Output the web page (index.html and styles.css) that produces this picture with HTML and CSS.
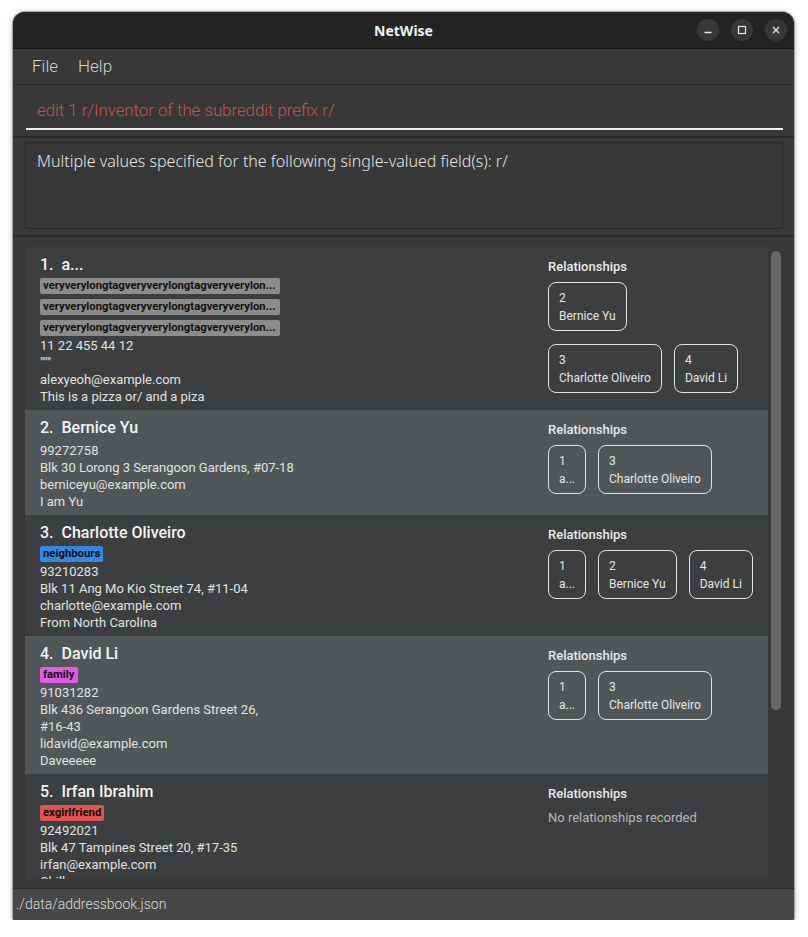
FILE: index.html
```html
<!DOCTYPE html>
<html lang="en">
<head>
<meta charset="utf-8">
<title>NetWise</title>
<link rel="stylesheet" href="styles.css">
</head>
<body>
<div class="window">
  <div class="titlebar">
    <div></div>
    <div class="title">NetWise</div>
    <div class="controls">
      <span class="ctl"><svg width="22" height="22" viewBox="0 0 22 22"><line x1="7.5" y1="13.5" x2="14.5" y2="13.5" stroke="#e8e8e8" stroke-width="1.3"/></svg></span>
      <span class="ctl"><svg width="22" height="22" viewBox="0 0 22 22"><rect x="7.5" y="7.5" width="7" height="7" fill="none" stroke="#e8e8e8" stroke-width="1.2"/></svg></span>
      <span class="ctl"><svg width="22" height="22" viewBox="0 0 22 22"><path d="M8 8 L14 14 M14 8 L8 14" stroke="#e8e8e8" stroke-width="1.3" fill="none"/></svg></span>
    </div>
  </div>
  <div class="menubar"><span class="menu-item">File</span><span class="menu-item">Help</span></div>
  <div class="command-pane"><div class="command-input">edit 1 r/Inventor of the subreddit prefix r/</div></div>
  <div class="result-pane"><div class="result-box">Multiple values specified for the following single-valued field(s): r/</div></div>
  <div class="list-pane">
    <div class="cells">
      <div class="cell even">
        <div class="info">
          <div class="name">1.&nbsp; a...</div>
          <div class="tags">
            <span class="tag tag-grey">veryverylongtagveryverylongtagveryverylon...</span>
            <span class="tag tag-grey">veryverylongtagveryverylongtagveryverylon...</span>
            <span class="tag tag-grey">veryverylongtagveryverylongtagveryverylon...</span>
          </div>
          <div class="line">11 22 455 44 12</div>
          <div class="line">"""</div>
          <div class="line">alexyeoh@example.com</div>
          <div class="line">This is a pizza or/ and a piza</div>
        </div>
        <div class="rel">
          <div class="rel-label">Relationships</div>
          <div class="rel-list">
            <div class="rel-box"><div>2</div><div>Bernice Yu</div></div>
            <div class="rel-break"></div>
            <div class="rel-box"><div>3</div><div>Charlotte Oliveiro</div></div>
            <div class="rel-box"><div>4</div><div>David Li</div></div>
          </div>
        </div>
      </div>
      <div class="cell odd">
        <div class="info">
          <div class="name">2.&nbsp; Bernice Yu</div>
          <div class="tags"></div>
          <div class="line">99272758</div>
          <div class="line">Blk 30 Lorong 3 Serangoon Gardens, #07-18</div>
          <div class="line">berniceyu@example.com</div>
          <div class="line">I am Yu</div>
        </div>
        <div class="rel">
          <div class="rel-label">Relationships</div>
          <div class="rel-list">
            <div class="rel-box"><div>1</div><div>a...</div></div>
            <div class="rel-box"><div>3</div><div>Charlotte Oliveiro</div></div>
          </div>
        </div>
      </div>
      <div class="cell even">
        <div class="info">
          <div class="name">3.&nbsp; Charlotte Oliveiro</div>
          <div class="tags"><span class="tag tag-blue">neighbours</span></div>
          <div class="line">93210283</div>
          <div class="line">Blk 11 Ang Mo Kio Street 74, #11-04</div>
          <div class="line">charlotte@example.com</div>
          <div class="line">From North Carolina</div>
        </div>
        <div class="rel">
          <div class="rel-label">Relationships</div>
          <div class="rel-list">
            <div class="rel-box"><div>1</div><div>a...</div></div>
            <div class="rel-box"><div>2</div><div>Bernice Yu</div></div>
            <div class="rel-box"><div>4</div><div>David Li</div></div>
          </div>
        </div>
      </div>
      <div class="cell odd">
        <div class="info">
          <div class="name">4.&nbsp; David Li</div>
          <div class="tags"><span class="tag tag-pink">family</span></div>
          <div class="line">91031282</div>
          <div class="line">Blk 436 Serangoon Gardens Street 26, <span class="nowrap">#16-43</span></div>
          <div class="line">lidavid@example.com</div>
          <div class="line">Daveeeee</div>
        </div>
        <div class="rel">
          <div class="rel-label">Relationships</div>
          <div class="rel-list">
            <div class="rel-box"><div>1</div><div>a...</div></div>
            <div class="rel-box"><div>3</div><div>Charlotte Oliveiro</div></div>
          </div>
        </div>
      </div>
      <div class="cell even">
        <div class="info">
          <div class="name">5.&nbsp; Irfan Ibrahim</div>
          <div class="tags"><span class="tag tag-red">exgirlfriend</span></div>
          <div class="line">92492021</div>
          <div class="line">Blk 47 Tampines Street 20, #17-35</div>
          <div class="line">irfan@example.com</div>
          <div class="line">Chill</div>
        </div>
        <div class="rel">
          <div class="rel-label">Relationships</div>
          <div class="rel-empty">No relationships recorded</div>
        </div>
      </div>
    </div>
    <div class="scrollbar"><div class="thumb"></div></div>
  </div>
  <div class="statusbar">./data/addressbook.json</div>
</div>
</body>
</html>
```
FILE: styles.css
```css
* { box-sizing: border-box; }
html, body { margin: 0; padding: 0; background: #ffffff; }
body { padding: 12px 14px 0 13px; font-family: Roboto, "Noto Sans", sans-serif; }

.window {
  width: 781px;
  height: 908px;
  display: flex;
  flex-direction: column;
  background: #383838;
  border-radius: 12px 12px 2px 2px;
  overflow: hidden;
  box-shadow: 0 1px 6px rgba(0,0,0,0.35), 0 0 0 1px rgba(0,0,0,0.25);
}

.titlebar {
  height: 37px;
  flex: none;
  background: #242424;
  border-bottom: 1px solid #141414;
  display: grid;
  grid-template-columns: 1fr auto 1fr;
  align-items: center;
}
.title { color: #f2f2f2; font-family: "Noto Sans", sans-serif; font-weight: 700; font-size: 14px; }
.controls { justify-self: end; display: flex; gap: 12px; padding-right: 7px; }
.ctl { width: 22px; height: 22px; border-radius: 50%; background: #383838; display: block; }
.ctl svg { display: block; }

.menubar {
  height: 36px;
  flex: none;
  border-bottom: 1px solid #2a2a2a;
  display: flex;
  align-items: center;
  padding: 0 0 1px 19px;
  gap: 20px;
}
.menu-item { color: #d4d4d4; font-size: 17px; font-weight: 300; }

.command-pane {
  height: 53px;
  flex: none;
  border-bottom: 2px solid #2a2a2a;
  padding: 0 11px 0 13px;
}
.command-input {
  height: 45px;
  padding: 13px 0 6px 11px;
  line-height: 24px;
  font-size: 16.8px;
  font-weight: 300;
  color: #c0564b;
  border-bottom: 2px solid #f0f0f0;
  white-space: nowrap;
}

.result-pane {
  height: 99px;
  flex: none;
  border-bottom: 2px solid #2a2a2a;
  padding: 4px 11px 0 12px;
}
.result-box {
  height: 87px;
  border: 1px solid #2a2a2a;
  padding: 7px 11px;
  line-height: 22px;
  font-family: "Noto Sans", sans-serif;
  font-size: 16px;
  font-weight: 300;
  color: #e4e4e4;
}

.list-pane {
  flex: 1;
  min-height: 0;
  display: flex;
  gap: 3px;
  padding: 10px 13px 9px 12px;
}
.cells {
  width: 743px;
  flex: none;
  overflow: hidden;
  display: flex;
  flex-direction: column;
}
.cell {
  flex: none;
  display: grid;
  grid-template-columns: 1fr 205px;
  padding: 8px 15px 5px;
}
.cell.even { background: #3c3e3f; }
.cell.odd { background: #515658; }

.info { min-width: 0; }
.name { color: #f4f4f4; font-size: 16px; font-weight: 500; line-height: 20px; margin-bottom: 3px; }
.tags { display: flex; flex-direction: column; align-items: flex-start; gap: 5px; margin-bottom: 1px; }
.tag {
  display: block;
  height: 16px;
  line-height: 16px;
  font-size: 11.3px;
  font-weight: 700;
  color: #111111;
  padding: 0 3px;
  border-radius: 2px;
  white-space: nowrap;
}
.tag-grey { background: #8c8c8c; width: 240px; overflow: hidden; text-overflow: ellipsis; }
.tag-blue { background: #3189e4; }
.tag-pink { background: #e05be2; }
.tag-red { background: #e35353; }
.line { color: #e2e2e2; font-size: 13px; line-height: 17px; max-width: 258px; }
.nowrap { white-space: nowrap; }

.rel { padding-top: 3px; }
.rel-label { color: #e8e8e8; font-size: 13px; font-weight: 500; line-height: 18px; }
.rel-list { display: flex; flex-wrap: wrap; column-gap: 12px; row-gap: 0; margin-top: 6px; }
.rel-break { flex-basis: 100%; height: 13px; }
.rel-box {
  border: 1px solid #e4e4e4;
  border-radius: 8px;
  padding: 6px 10px 5px;
  font-size: 12px;
  line-height: 18px;
  color: #e6e6e6;
}
.rel-empty { margin-top: 6px; font-size: 13px; line-height: 18px; color: #b8b8b8; }

.scrollbar { width: 10px; flex: none; }
.thumb { margin-top: 4px; height: 459px; border-radius: 5px; background: #686868; }

.statusbar {
  height: 32px;
  flex: none;
  border-top: 1px solid #2a2a2a;
  background: #474747;
  padding-left: 3px;
  line-height: 31px;
  font-size: 14px;
  font-weight: 300;
  color: #dcdcdc;
}
```
